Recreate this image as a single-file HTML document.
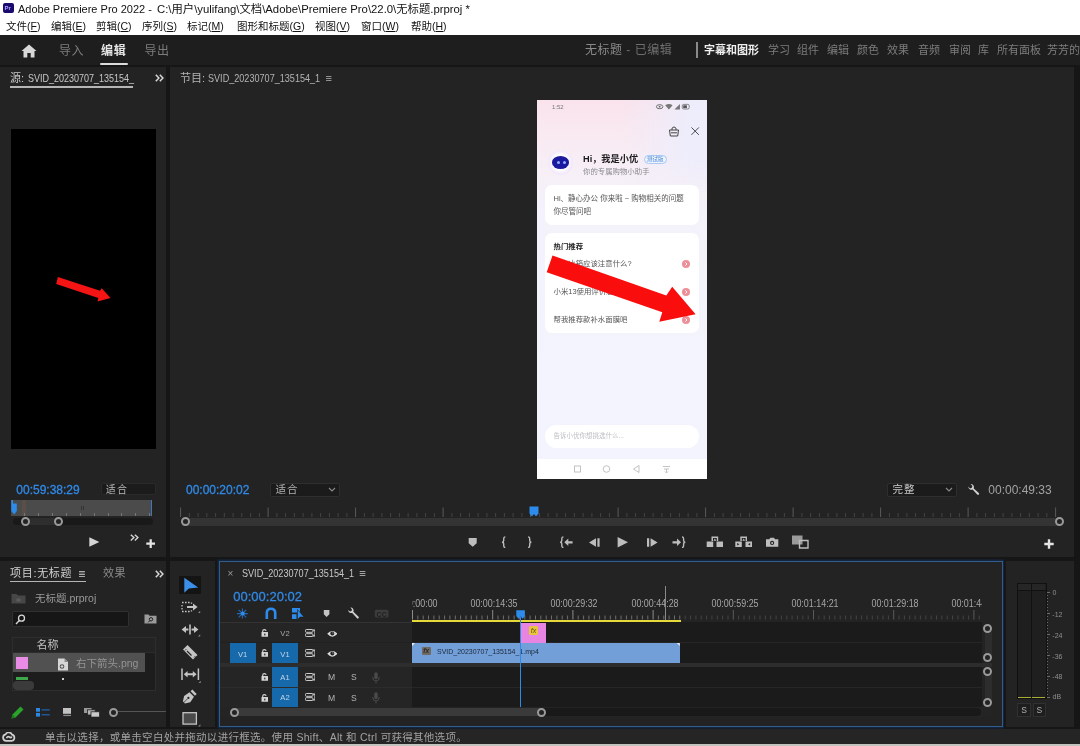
<!DOCTYPE html>
<html lang="zh-CN">
<head>
<meta charset="utf-8">
<title>Adobe Premiere Pro 2022</title>
<style>
*{box-sizing:border-box;margin:0;padding:0}
html,body{width:1080px;height:746px;overflow:hidden;background:#161616}
body{position:relative;font-family:"Liberation Sans","Noto Sans CJK SC",sans-serif;font-size:11px;color:#a9a9a9}
.abs{position:absolute}
.t{position:absolute;white-space:nowrap;line-height:1}
/* title + menu */
#titlebar{left:0;top:0;width:1080px;height:35px;background:#fff}
#titlebar .t{color:#111}
/* workspace header */
#header{left:0;top:35px;width:1080px;height:30px;background:#1e1e1e}
/* panels */
.panel{position:absolute;background:#232323}
.wsr{font-size:11px;color:#7c7c7c}
.mi{font-size:10.5px}
.dot{width:8px;height:8px;border-radius:50%;background:#ee8f97}
.rl{font-size:10.5px;color:#a6a6a6;transform:scaleX(.85);transform-origin:50% 50%}
.tk{font-size:7.6px;color:#c4d4e6;text-align:center}
.ms{font-size:8.6px;color:#b2b2b2}
.blue{color:#3089e6;-webkit-text-stroke:.3px #3089e6}
.box{position:absolute;background:#1b1b1b;border:1px solid #2e2e2e;border-radius:2px}
.ring{position:absolute;width:9px;height:9px;border:2px solid #9a9a9a;border-radius:50%;background:#232323}
</style>
</head>
<body>
<div id="root" style="position:absolute;left:0;top:0;width:1080px;height:746px;will-change:transform">
<!-- ===== Title bar & menu ===== -->
<div id="titlebar" class="abs">
  <div class="abs" style="left:3px;top:3px;width:11px;height:10px;background:#1a0a6e;border-radius:2px"></div>
  <div class="t" style="left:4.5px;top:4.5px;font-size:6px;font-weight:bold;color:#b9a6ff">Pr</div>
  <div class="t" id="ttl" style="left:18px;top:4px;font-size:11px">Adobe Premiere Pro 2022 - <span style="position:absolute;left:139px;top:-.2px;font-size:11.33px">C:\用户\yulifang\文档\Adobe\Premiere Pro\22.0\无标题.prproj *</span></div>
  <div class="t mi" style="left:6px;top:21px">文件(<u>F</u>)</div>
  <div class="t mi" style="left:51px;top:21px">编辑(<u>E</u>)</div>
  <div class="t mi" style="left:96px;top:21px">剪辑(<u>C</u>)</div>
  <div class="t mi" style="left:142px;top:21px">序列(<u>S</u>)</div>
  <div class="t mi" style="left:187px;top:21px">标记(<u>M</u>)</div>
  <div class="t mi" style="left:237px;top:21px">图形和标题(<u>G</u>)</div>
  <div class="t mi" style="left:315px;top:21px">视图(<u>V</u>)</div>
  <div class="t mi" style="left:361px;top:21px">窗口(<u>W</u>)</div>
  <div class="t mi" style="left:411px;top:21px">帮助(<u>H</u>)</div>
</div>

<!-- ===== Workspace header ===== -->
<div id="header" class="abs">
  <svg class="abs" style="left:21px;top:9px" width="16" height="14" viewBox="0 0 16 14"><path d="M8 0.5 L0.5 7 H2.5 V13.5 H6.3 V9 H9.7 V13.5 H13.5 V7 H15.5 Z" fill="#d8d8d8"/></svg>
  <div class="t ws" style="left:59px;top:9.5px;font-size:12px;letter-spacing:.5px;color:#7d7d7d">导入</div>
  <div class="t ws" style="left:101px;top:9.5px;font-size:12px;letter-spacing:.8px;color:#e6e6e6;font-weight:bold">编辑</div>
  <div class="abs" style="left:100px;top:27.8px;width:27.6px;height:2.1px;background:#dcdcdc;border-radius:1px"></div>
  <div class="t ws" style="left:144.5px;top:9.5px;font-size:12px;letter-spacing:.5px;color:#7d7d7d">导出</div>
  <div class="t" style="left:585px;top:9px;font-size:12px;color:#6f6f6f;letter-spacing:.5px"><span style="color:#8a8a8a">无标题</span> - 已编辑</div>
  <div class="abs" style="left:696px;top:7px;width:2px;height:16px;background:#8a8a8a"></div>
  <div class="t" style="left:704px;top:10px;font-size:11px;color:#f0f0f0;font-weight:bold">字幕和图形</div>
  <div class="t wsr" style="left:768px;top:10px">学习</div>
  <div class="t wsr" style="left:797px;top:10px">组件</div>
  <div class="t wsr" style="left:827px;top:10px">编辑</div>
  <div class="t wsr" style="left:857px;top:10px">颜色</div>
  <div class="t wsr" style="left:887px;top:10px">效果</div>
  <div class="t wsr" style="left:918px;top:10px">音频</div>
  <div class="t wsr" style="left:949px;top:10px">审阅</div>
  <div class="t wsr" style="left:978px;top:10px">库</div>
  <div class="t wsr" style="left:997px;top:10px">所有面板</div>
  <div class="t wsr" style="left:1047px;top:10px">芳芳的</div>
</div>

<!-- ===== Source panel ===== -->
<div id="source" class="panel" style="left:0;top:67px;width:166px;height:490px">
  <div class="t" style="left:10px;top:5.5px;font-size:11px;color:#c8c8c8">源:</div><div class="t" style="left:27.5px;top:5.5px;font-size:11px;color:#c8c8c8;transform:scaleX(.817);transform-origin:0 0">SVID_20230707_135154_</div>
  <div class="abs" style="left:10px;top:19px;width:123px;height:2px;background:#b5b5b5"></div>
  <svg class="abs" style="left:154.5px;top:7px" width="9" height="8" viewBox="0 0 9 8" fill="none" stroke="#d6d6d6" stroke-width="1.5"><path d="M0.8 0.8 L3.9 4 L0.8 7.2 M4.8 0.8 L7.9 4 L4.8 7.2"/></svg>
  <div class="abs" style="left:11.1px;top:61.5px;width:144.8px;height:320.9px;background:#000"></div>
  <svg class="abs" style="left:50px;top:203px" width="70" height="40" viewBox="50 270 70 40"><path d="M57.9 277 L100 290.8 L101.7 288.2 L110.5 297.9 L97.5 301.4 L98.3 298 L56.2 283.9 Z" fill="#f51414"/></svg>
  <div class="t blue" style="left:16.3px;top:417px;font-size:12px">00:59:38:29</div>
  <div class="box" style="left:100.5px;top:416px;width:55px;height:12px;border-color:#2a2a2a"></div>
  <div class="t" style="left:105.8px;top:417.6px;font-size:10px;color:#b8b8b8;letter-spacing:1.2px">适合</div>
  <div class="abs" style="left:11px;top:433.2px;width:141px;height:16px;background:#4b4b4b"></div>
  <div class="abs" style="left:22px;top:433.2px;width:4px;height:16px;background:#5a4f46"></div>
  <div class="abs" style="left:24.4px;top:445.5px;width:1px;height:3.7px;background:#777"></div><div class="abs" style="left:38.2px;top:445.5px;width:1px;height:3.7px;background:#777"></div><div class="abs" style="left:52.1px;top:445.5px;width:1px;height:3.7px;background:#777"></div><div class="abs" style="left:65.9px;top:445.5px;width:1px;height:3.7px;background:#777"></div><div class="abs" style="left:79.8px;top:445.5px;width:1px;height:3.7px;background:#777"></div><div class="abs" style="left:93.7px;top:445.5px;width:1px;height:3.7px;background:#777"></div><div class="abs" style="left:107.5px;top:445.5px;width:1px;height:3.7px;background:#777"></div><div class="abs" style="left:121.3px;top:445.5px;width:1px;height:3.7px;background:#777"></div><div class="abs" style="left:135.2px;top:445.5px;width:1px;height:3.7px;background:#777"></div><div class="abs" style="left:149.0px;top:445.5px;width:1px;height:3.7px;background:#777"></div>
  <div class="abs" style="left:81px;top:438.5px;width:1px;height:4px;background:#333"></div><div class="abs" style="left:83px;top:438.5px;width:1px;height:4px;background:#333"></div>
  <svg class="abs" style="left:10.5px;top:433.2px" width="7" height="15" viewBox="0 0 7 15"><path d="M0.3 0 H2 V3.5 H5.8 V11 L3.2 14.6 L0.3 11 Z" fill="#2d8ceb"/></svg>
  <div class="abs" style="left:150.8px;top:433.2px;width:1.2px;height:16px;background:#3d78b8"></div>
  <div class="abs" style="left:13.4px;top:451.3px;width:140px;height:6.8px;background:#191919;border-radius:3.4px"></div>
  <div class="abs" style="left:25px;top:451.3px;width:34px;height:6.8px;background:#2e2e2e"></div>
  <div class="ring" style="left:20.7px;top:450.2px"></div>
  <div class="ring" style="left:54.1px;top:450.2px"></div>
  <svg class="abs" style="left:89px;top:470.4px" width="11" height="10" viewBox="0 0 11 10"><path d="M0.3 0.3 L10.4 5 L0.3 9.7 Z" fill="#d4d4d4"/></svg>
  <svg class="abs" style="left:130.3px;top:466.5px" width="9" height="8" viewBox="0 0 9 8" fill="none" stroke="#d6d6d6" stroke-width="1.4"><path d="M0.8 0.8 L3.9 3.6 L0.8 6.4 M4.8 0.8 L7.9 3.6 L4.8 6.4"/></svg>
  <svg class="abs" style="left:146px;top:471.6px" width="9.4" height="9.4" viewBox="0 0 10 10"><path d="M3.8 0.3 H6.2 V3.8 H9.7 V6.2 H6.2 V9.7 H3.8 V6.2 H0.3 V3.8 H3.8 Z" fill="#e4e4e4"/></svg>
</div>

<!-- ===== Program panel ===== -->
<div id="program" class="panel" style="left:170px;top:67px;width:904px;height:490px">
  <div class="t" style="left:10px;top:5.5px;font-size:11px;color:#b4b4b4">节目:</div><div class="t" style="left:37.8px;top:5.5px;font-size:11px;color:#b4b4b4;transform:scaleX(.826);transform-origin:0 0">SVID_20230707_135154_1</div><div class="t" style="left:155.5px;top:5.5px;font-size:11px;color:#b4b4b4">≡</div>

  <!-- program controls -->
  <div class="t blue" style="left:16px;top:417px;font-size:12px">00:00:20:02</div>
  <div class="box" style="left:100px;top:415.5px;width:70px;height:14px"></div>
  <div class="t" style="left:105.5px;top:417px;font-size:10.5px;color:#b0b0b0;letter-spacing:1px">适合</div>
  <svg class="abs" style="left:157.5px;top:420px" width="8" height="5" viewBox="0 0 8 5" fill="none" stroke="#8a8a8a" stroke-width="1.1"><path d="M1 1 L4 4 L7 1"/></svg>
  <div class="box" style="left:717px;top:415.5px;width:70px;height:14px"></div>
  <div class="t" style="left:722.5px;top:417px;font-size:10.5px;color:#c8c8c8;letter-spacing:1px">完整</div>
  <svg class="abs" style="left:774.5px;top:420px" width="8" height="5" viewBox="0 0 8 5" fill="none" stroke="#8a8a8a" stroke-width="1.1"><path d="M1 1 L4 4 L7 1"/></svg>
  <svg class="abs" style="left:797px;top:415.5px" width="13" height="13" viewBox="0 0 13 13"><path d="M1.2 3.6 A3.3 3.3 0 0 0 5.6 6.6 L10.2 11.6 A1.1 1.1 0 0 0 11.8 10 L6.8 5.4 A3.3 3.3 0 0 0 3.6 1 L5.4 3 L4.8 4.8 L3 5.4 Z" fill="#cfcfcf"/></svg>
  <div class="t" style="left:818.3px;top:417px;font-size:12px;color:#a2a2a2">00:00:49:33</div>
  <svg class="abs" style="left:0;top:0" width="904" height="490" viewBox="0 0 904 490" stroke-width="1" fill="none"><path d="M10.6 440.5 V450" stroke="#5a5a5a"/><path d="M19.3 446 V450" stroke="#444"/><path d="M28.1 446 V450" stroke="#444"/><path d="M36.8 446 V450" stroke="#444"/><path d="M45.6 446 V450" stroke="#444"/><path d="M54.3 446 V450" stroke="#444"/><path d="M63.1 446 V450" stroke="#444"/><path d="M71.8 446 V450" stroke="#444"/><path d="M80.6 446 V450" stroke="#444"/><path d="M89.4 446 V450" stroke="#444"/><path d="M98.1 440.5 V450" stroke="#5a5a5a"/><path d="M106.9 446 V450" stroke="#444"/><path d="M115.6 446 V450" stroke="#444"/><path d="M124.4 446 V450" stroke="#444"/><path d="M133.1 446 V450" stroke="#444"/><path d="M141.9 446 V450" stroke="#444"/><path d="M150.6 446 V450" stroke="#444"/><path d="M159.4 446 V450" stroke="#444"/><path d="M168.1 446 V450" stroke="#444"/><path d="M176.9 446 V450" stroke="#444"/><path d="M185.6 440.5 V450" stroke="#5a5a5a"/><path d="M194.4 446 V450" stroke="#444"/><path d="M203.1 446 V450" stroke="#444"/><path d="M211.9 446 V450" stroke="#444"/><path d="M220.6 446 V450" stroke="#444"/><path d="M229.4 446 V450" stroke="#444"/><path d="M238.1 446 V450" stroke="#444"/><path d="M246.9 446 V450" stroke="#444"/><path d="M255.6 446 V450" stroke="#444"/><path d="M264.4 446 V450" stroke="#444"/><path d="M273.1 440.5 V450" stroke="#5a5a5a"/><path d="M281.9 446 V450" stroke="#444"/><path d="M290.6 446 V450" stroke="#444"/><path d="M299.4 446 V450" stroke="#444"/><path d="M308.1 446 V450" stroke="#444"/><path d="M316.9 446 V450" stroke="#444"/><path d="M325.6 446 V450" stroke="#444"/><path d="M334.4 446 V450" stroke="#444"/><path d="M343.1 446 V450" stroke="#444"/><path d="M351.9 446 V450" stroke="#444"/><path d="M360.6 440.5 V450" stroke="#5a5a5a"/><path d="M369.4 446 V450" stroke="#444"/><path d="M378.1 446 V450" stroke="#444"/><path d="M386.9 446 V450" stroke="#444"/><path d="M395.6 446 V450" stroke="#444"/><path d="M404.4 446 V450" stroke="#444"/><path d="M413.1 446 V450" stroke="#444"/><path d="M421.9 446 V450" stroke="#444"/><path d="M430.6 446 V450" stroke="#444"/><path d="M439.4 446 V450" stroke="#444"/><path d="M448.1 440.5 V450" stroke="#5a5a5a"/><path d="M456.9 446 V450" stroke="#444"/><path d="M465.6 446 V450" stroke="#444"/><path d="M474.4 446 V450" stroke="#444"/><path d="M483.1 446 V450" stroke="#444"/><path d="M491.9 446 V450" stroke="#444"/><path d="M500.6 446 V450" stroke="#444"/><path d="M509.4 446 V450" stroke="#444"/><path d="M518.1 446 V450" stroke="#444"/><path d="M526.9 446 V450" stroke="#444"/><path d="M535.6 440.5 V450" stroke="#5a5a5a"/><path d="M544.4 446 V450" stroke="#444"/><path d="M553.1 446 V450" stroke="#444"/><path d="M561.9 446 V450" stroke="#444"/><path d="M570.6 446 V450" stroke="#444"/><path d="M579.4 446 V450" stroke="#444"/><path d="M588.1 446 V450" stroke="#444"/><path d="M596.9 446 V450" stroke="#444"/><path d="M605.6 446 V450" stroke="#444"/><path d="M614.4 446 V450" stroke="#444"/><path d="M623.1 440.5 V450" stroke="#5a5a5a"/><path d="M631.9 446 V450" stroke="#444"/><path d="M640.6 446 V450" stroke="#444"/><path d="M649.4 446 V450" stroke="#444"/><path d="M658.1 446 V450" stroke="#444"/><path d="M666.9 446 V450" stroke="#444"/><path d="M675.6 446 V450" stroke="#444"/><path d="M684.4 446 V450" stroke="#444"/><path d="M693.1 446 V450" stroke="#444"/><path d="M701.9 446 V450" stroke="#444"/><path d="M710.6 440.5 V450" stroke="#5a5a5a"/><path d="M719.4 446 V450" stroke="#444"/><path d="M728.1 446 V450" stroke="#444"/><path d="M736.9 446 V450" stroke="#444"/><path d="M745.6 446 V450" stroke="#444"/><path d="M754.4 446 V450" stroke="#444"/><path d="M763.1 446 V450" stroke="#444"/><path d="M771.9 446 V450" stroke="#444"/><path d="M780.6 446 V450" stroke="#444"/><path d="M789.4 446 V450" stroke="#444"/><path d="M798.1 440.5 V450" stroke="#5a5a5a"/><path d="M806.9 446 V450" stroke="#444"/><path d="M815.6 446 V450" stroke="#444"/><path d="M824.4 446 V450" stroke="#444"/><path d="M833.1 446 V450" stroke="#444"/><path d="M841.9 446 V450" stroke="#444"/><path d="M850.6 446 V450" stroke="#444"/><path d="M859.3 446 V450" stroke="#444"/><path d="M868.1 446 V450" stroke="#444"/><path d="M876.8 446 V450" stroke="#444"/><path d="M885.6 440.5 V450" stroke="#5a5a5a"/></svg>
  <div class="abs" style="left:12px;top:450.5px;width:878px;height:8.5px;background:#343434"></div>
  <div class="ring" style="left:11px;top:450px"></div>
  <div class="ring" style="left:884.5px;top:450px"></div>
  <svg class="abs" style="left:359px;top:438.5px" width="10" height="11" viewBox="0 0 10 11"><path d="M0.5 0.5 H9.5 V7.5 L7 10.5 L5 8 L3 10.5 L0.5 7.5 Z" fill="#2d8ceb"/></svg>
  <svg class="abs" style="left:290px;top:463px" width="360" height="25" viewBox="460 530 360 25" fill="#bdbdbd" stroke="none">
    <path d="M468.7 538 H476.7 V543.3 L472.7 546.8 L468.7 543.3 Z"/>
    <path d="M505.3 537 C503.7 537 503.7 537.6 503.7 539.2 V540.6 C503.7 541.8 503.1 542.2 502.0 542.2 C503.1 542.2 503.7 542.6 503.7 543.8 V545.2 C503.7 546.8 503.7 547.4 505.3 547.4" fill="none" stroke="#bdbdbd" stroke-width="1.4"/>
    <path d="M528.1 537 C529.7 537 529.7 537.6 529.7 539.2 V540.6 C529.7 541.8 530.3 542.2 531.4 542.2 C530.3 542.2 529.7 542.6 529.7 543.8 V545.2 C529.7 546.8 529.7 547.4 528.1 547.4" fill="none" stroke="#bdbdbd" stroke-width="1.4"/>
    <path d="M563.4 537 C561.8 537 561.8 537.6 561.8 539.2 V540.6 C561.8 541.8 561.2 542.2 560.1 542.2 C561.2 542.2 561.8 542.6 561.8 543.8 V545.2 C561.8 546.8 561.8 547.4 563.4 547.4" fill="none" stroke="#bdbdbd" stroke-width="1.4"/>
    <path d="M564.3 542.3 L568.3 538.6 V541.2 H572.6 V543.4 H568.3 V546 Z"/>
    <path d="M589 542.5 L596 538.2 V546.8 Z M597.4 538.2 H599.6 V546.8 H597.4 Z"/>
    <path d="M617.6 537 L628 542.2 L617.6 547.4 Z"/>
    <path d="M647 538.2 H649.2 V546.8 H647 Z M650.6 538.2 L657.6 542.5 L650.6 546.8 Z"/>
    <path d="M672.5 541.2 H677 V538.6 L681 542.3 L677 546 V543.4 H672.5 Z"/>
    <path d="M682.0 537 C683.6 537 683.6 537.6 683.6 539.2 V540.6 C683.6 541.8 684.2 542.2 685.3 542.2 C684.2 542.2 683.6 542.6 683.6 543.8 V545.2 C683.6 546.8 683.6 547.4 682.0 547.4" fill="none" stroke="#bdbdbd" stroke-width="1.4"/>
    <path d="M706.7 541.5 H713.2 V547 H706.7 Z M716.5 541.5 H723 V547 H716.5 Z M711.5 536.5 H718.2 V541 H716.8 V538 H713 V541 H711.5 Z M714.9 538.6 L716.3 540.8 H713.5 Z"/>
    <path d="M735.3 541.5 H741.8 V547 H735.3 Z M745.5 541.5 H752 V547 H745.5 Z M740.3 536.5 H747 V541 H745.6 V538 H741.8 V541 H740.3 Z M743.7 538.6 L745.1 540.8 H742.3 Z"/>
    <path d="M737.2 543 L739.4 544.3 L737.2 545.6 Z M750.2 543 L748 544.3 L750.2 545.6 Z" fill="#232323"/>
    <path d="M766 539.3 H769.3 L770.3 537.7 H774 L775 539.3 H778.3 V546.8 H766 Z"/>
    <circle cx="772.1" cy="542.9" r="2.1" fill="#232323"/><circle cx="772.1" cy="542.9" r="1" fill="#bdbdbd"/>
    <path d="M792 535.5 H802.5 V544.5 H792 Z" fill="#9a9a9a"/>
    <path d="M799.5 540.5 H808 V548 H799.5 Z" fill="none" stroke="#bdbdbd" stroke-width="1.4"/>
  </svg>
  <svg class="abs" style="left:874px;top:471.5px" width="10" height="10" viewBox="0 0 10 10"><path d="M3.8 0.3 H6.2 V3.8 H9.7 V6.2 H6.2 V9.7 H3.8 V6.2 H0.3 V3.8 H3.8 Z" fill="#e4e4e4"/></svg>
  <!-- phone frame -->
  <div id="phone" class="abs" style="left:367px;top:33px;width:170px;height:378.6px;overflow:hidden;background:linear-gradient(180deg,#fae3ec 0%,#f9eaf2 10%,#f7eff6 18%,#f4f1fa 27%,#f3f3fc 45%,#f3f4fd 100%);font-family:'Liberation Sans','Noto Sans CJK SC',sans-serif">
    <div class="abs" style="left:85px;top:0;width:85px;height:95px;background:linear-gradient(90deg,rgba(238,238,252,0),rgba(236,237,252,.95) 85%);-webkit-mask-image:linear-gradient(180deg,#000 60%,transparent);mask-image:linear-gradient(180deg,#000 60%,transparent)"></div>
    <div class="t" style="left:15px;top:4px;font-size:6px;color:#777">1:52</div>
    <svg class="abs" style="left:118px;top:2.8px" width="37" height="7.4" viewBox="0 0 38 8">
      <ellipse cx="4" cy="4" rx="3.5" ry="2.2" fill="none" stroke="#666" stroke-width="1"/><circle cx="4" cy="4" r="1" fill="#666"/>
      <path d="M10 2.5 Q14 -0.5 18 2.5 L14 7 Z" fill="#777"/>
      <path d="M20 7 L26 1 V7 Z" fill="#777"/>
      <rect x="28.5" y="1.5" width="7.5" height="5" rx="1.5" fill="none" stroke="#666" stroke-width=".8"/><rect x="29.5" y="2.5" width="4" height="3" fill="#555"/>
    </svg>
    <svg class="abs" style="left:131px;top:25px" width="12" height="12" viewBox="0 0 12 12" fill="none" stroke="#444" stroke-width="1"><path d="M1.5 5 H10.5 L9.7 11 H2.3 Z"/><path d="M4 5 V3.2 Q6 0.5 8 3.2 V5"/><path d="M3 7.8 H9"/></svg>
    <svg class="abs" style="left:154.4px;top:26.8px" width="8.3" height="8.3" viewBox="0 0 9 9" stroke="#444" stroke-width="1.05"><path d="M0.5 0.5 L8.5 8.5 M8.5 0.5 L0.5 8.5"/></svg>
    <!-- avatar -->
    <div class="abs" style="left:11px;top:50px;width:25px;height:25px;border-radius:50%;background:radial-gradient(circle,#ffffff 40%,#efe6fb 70%,rgba(238,228,250,0) 100%)"></div>
    <div class="abs" style="left:15.2px;top:56px;width:17px;height:12.6px;border-radius:50%;background:#1b1a9e"></div>
    <div class="abs" style="left:19.5px;top:60.5px;width:3px;height:3px;border-radius:50%;background:#8fb0ff"></div>
    <div class="abs" style="left:25.5px;top:60.5px;width:3px;height:3px;border-radius:50%;background:#8fb0ff"></div>
    <div class="t" style="left:46px;top:54.5px;font-size:9.2px;font-weight:bold;color:#1a1a1a">Hi，我是小优</div>
    <div class="abs" style="left:106.5px;top:55px;width:23.5px;height:8.5px;border:1px solid #a9c8f2;border-radius:4.5px;background:#eef4fd"></div>
    <div class="t" style="left:110px;top:56.7px;font-size:5.5px;color:#4a86d8">测试版</div>
    <div class="t" style="left:46px;top:68.2px;font-size:7.4px;color:#8a8a8f">你的专属购物小助手</div>
    <!-- card 1 -->
    <div class="abs" style="left:7.5px;top:85px;width:154.5px;height:40px;border-radius:7px;background:#fff"></div>
    <div class="t" style="left:16.5px;top:94.8px;font-size:7.5px;color:#555">Hi、静心办公 你来啦 ~ 购物相关的问题</div>
    <div class="t" style="left:16.5px;top:107.8px;font-size:7.5px;color:#555">你尽管问吧</div>
    <!-- card 2 -->
    <div class="abs" style="left:7.5px;top:132.5px;width:154.5px;height:100.5px;border-radius:7px;background:#fff"></div>
    <div class="t" style="left:16.5px;top:142.8px;font-size:7.4px;font-weight:bold;color:#222">热门推荐</div>
    <div class="t" style="left:16.5px;top:160px;font-size:7.4px;color:#555">买电冰箱应该注意什么?</div>
    <div class="t" style="left:16.5px;top:188.3px;font-size:7.4px;color:#555">小米13使用评价怎么样</div>
    <div class="t" style="left:16.5px;top:216.3px;font-size:7.4px;color:#555">帮我推荐款补水面膜吧</div>
    <div class="abs dot" style="left:145px;top:159.5px"><svg class="abs" style="left:0;top:0" width="8" height="8" viewBox="0 0 8 8" fill="none" stroke="#fff" stroke-width=".9"><path d="M3.3 2.3 L5 4 L3.3 5.7"/></svg></div>
    <div class="abs dot" style="left:145px;top:188px"><svg class="abs" style="left:0;top:0" width="8" height="8" viewBox="0 0 8 8" fill="none" stroke="#fff" stroke-width=".9"><path d="M3.3 2.3 L5 4 L3.3 5.7"/></svg></div>
    <div class="abs dot" style="left:145px;top:216px"><svg class="abs" style="left:0;top:0" width="8" height="8" viewBox="0 0 8 8" fill="none" stroke="#fff" stroke-width=".9"><path d="M3.3 2.3 L5 4 L3.3 5.7"/></svg></div>
    <!-- red arrow -->
    <svg class="abs" style="left:0;top:140px" width="170" height="100" viewBox="537 240 170 100"><path d="M552.5 255.5 L666.3 295.4 L672.2 286.7 L695.6 314.3 L659.3 321.8 L662.3 312.3 L546.7 272.2 Z" fill="#f90d0d"/></svg>
    <!-- input -->
    <div class="abs" style="left:8px;top:324.5px;width:154px;height:23px;border-radius:11.5px;background:#fff"></div>
    <div class="t" style="left:16.5px;top:333px;font-size:6.5px;color:#bdbdc4">告诉小优你想挑选什么...</div>
    <!-- nav bar -->
    <div class="abs" style="left:0;top:359.4px;width:170px;height:19.4px;background:#fff"></div>
    <svg class="abs" style="left:30px;top:362px" width="110" height="14" viewBox="0 0 110 14" fill="none" stroke="#bcbcbc" stroke-width=".9">
      <rect x="7.5" y="4" width="6" height="6"/><circle cx="39.5" cy="7" r="3.3"/><path d="M72 3.5 L66.5 7 L72 10.5 Z"/><path d="M96 4.5 H103 M97 7 H102 M99.5 7 V10.5 M98 9.5 L99.5 11 L101 9.5"/>
    </svg>
  </div>
</div>

<!-- ===== Project panel ===== -->
<div id="project" class="panel" style="left:0;top:561px;width:166px;height:166px">
  <div class="t" style="left:10px;top:7px;font-size:11px;color:#d2d2d2;letter-spacing:.7px">项目:无标题</div><div class="t" style="left:78.3px;top:6.8px;font-size:12px;color:#d2d2d2">≡</div>
  <div class="abs" style="left:10px;top:19.5px;width:76px;height:1.5px;background:#b5b5b5"></div>
  <div class="t" style="left:103px;top:7px;font-size:11px;color:#8a8a8a;letter-spacing:.6px">效果</div>
  <svg class="abs" style="left:154.5px;top:8.5px" width="9" height="8" viewBox="0 0 9 8" fill="none" stroke="#d6d6d6" stroke-width="1.5"><path d="M0.8 0.8 L3.9 4 L0.8 7.2 M4.8 0.8 L7.9 4 L4.8 7.2"/></svg>
  <svg class="abs" style="left:11px;top:31.5px" width="15" height="11" viewBox="0 0 15 11"><path d="M0.5 1 H5.5 L7 2.5 H14.5 V10.5 H0.5 Z" fill="#474747"/><path d="M5.5 5.5 h4 v3 h-4z" fill="#5c5c5c"/></svg>
  <div class="t" style="left:35px;top:31.5px;font-size:10.5px;color:#9a9a9a">无标题.prproj</div>
  <div class="abs" style="left:11.5px;top:50px;width:117px;height:16px;background:#161616;border:1px solid #303030;border-radius:2px"></div>
  <svg class="abs" style="left:15px;top:52.5px" width="11" height="11" viewBox="0 0 11 11" fill="none" stroke="#d8d8d8" stroke-width="1.3"><circle cx="6.5" cy="4.2" r="3"/><path d="M4.3 6.5 L1 10"/></svg>
  <svg class="abs" style="left:143.5px;top:53px" width="13" height="10" viewBox="0 0 13 10"><path d="M0.5 0.5 H4.5 L5.5 1.8 H12.5 V9.5 H0.5 Z" fill="#9a9a9a"/><circle cx="7" cy="5.3" r="1.7" fill="none" stroke="#232323" stroke-width="1"/><path d="M5.8 6.6 L4.3 8.3" stroke="#232323" stroke-width="1"/></svg>
  <!-- list -->
  <div class="abs" style="left:11.5px;top:75.5px;width:144.5px;height:54px;background:#1d1d1d;border:1px solid #2e2e2e"></div>
  <div class="abs" style="left:12.5px;top:76.5px;width:142.5px;height:15.5px;background:#232323;border-bottom:1px solid #2c2c2c"></div>
  <div class="t" style="left:36.5px;top:79px;font-size:11px;color:#c4c4c4">名称</div>
  <div class="abs" style="left:12.5px;top:92.3px;width:132.5px;height:19px;background:#515151"></div>
  <div class="abs" style="left:16px;top:95.7px;width:12.3px;height:12.3px;background:#e88ce6"></div>
  <svg class="abs" style="left:57px;top:96.5px" width="12" height="13" viewBox="0 0 12 13"><path d="M1 0.5 H7.5 L11 4 V12.5 H1 Z" fill="#d6d6d6"/><path d="M7.5 0.5 V4 H11 Z" fill="#8a8a8a"/><circle cx="5" cy="8.5" r="2.3" fill="#515151"/><path d="M3.4 8.5 L5 6.9 L6.6 8.5 L5 10.1 Z" fill="#d6d6d6"/></svg>
  <div class="t" style="left:76px;top:96.8px;font-size:10.5px;color:#949494">右下箭头.png</div>
  <div class="abs" style="left:16.3px;top:115.6px;width:11.8px;height:3.6px;background:#3fa84c"></div>
  <div class="abs" style="left:61.5px;top:116.5px;width:2px;height:2px;background:#ccc"></div>
  <div class="abs" style="left:12.5px;top:120px;width:21px;height:8.5px;background:#3b3b3b;border-radius:4px"></div>
  <!-- footer icons -->
  <svg class="abs" style="left:10px;top:143.5px" width="15" height="15" viewBox="0 0 15 15"><path d="M1.5 13.5 L2.5 9.5 L10.5 1.5 L13.5 4.5 L5.5 12.5 Z" fill="#2ba32b"/><path d="M1.5 13.5 L2.5 9.5 L5.5 12.5 Z" fill="#1e7a1e"/></svg>
  <svg class="abs" style="left:36px;top:147.3px" width="14" height="9" viewBox="0 0 14 9"><rect x="0" y="0" width="4" height="3.7" fill="#2d86e0"/><rect x="0" y="4.9" width="4" height="3.7" fill="#2d86e0"/><rect x="5.5" y="1.2" width="8.3" height="1.3" fill="#1f5fa6"/><rect x="5.5" y="6.1" width="8.3" height="1.3" fill="#1f5fa6"/></svg>
  <svg class="abs" style="left:63px;top:147.3px" width="8.4" height="8.4" viewBox="0 0 8.4 8.4"><rect x="0" y="0" width="8.4" height="5.8" fill="#c2c2c2"/><rect x="0.3" y="6.8" width="7.8" height="1.3" fill="#8a8a8a"/></svg>
  <svg class="abs" style="left:84px;top:146.8px" width="16" height="9.4" viewBox="0 0 16 9.4"><rect x="0" y="0" width="7.5" height="5" fill="#9a9a9a"/><rect x="3.4" y="1.8" width="7.8" height="5.2" fill="#b4b4b4" stroke="#232323" stroke-width=".8"/><rect x="7" y="3.8" width="8.6" height="5.3" fill="#cacaca" stroke="#232323" stroke-width=".8"/></svg>
  <div class="abs" style="left:118px;top:150.4px;width:48px;height:1px;background:#555"></div>
  <div class="ring" style="left:108.9px;top:146.6px"></div>
</div>

<!-- ===== Tools panel ===== -->
<div id="tools" class="panel" style="left:170px;top:561px;width:45px;height:166px">
  <div class="abs" style="left:9.4px;top:15.2px;width:21.2px;height:18.3px;background:#141414;border-radius:1px"></div>
  <svg class="abs" style="left:6px;top:14px" width="30" height="152" viewBox="176 575 30 152">
    <path d="M184.3 577.8 V592.8 L188.8 588.6 L198.2 587.6 Z" fill="#3b8fe8"/>
    <!-- track select -->
    <path d="M182 602.5 h1.6 M185 602.5 h1.6 M188 602.5 h1.6 M182 605 v1.4 M182 608 v1.4 M182 611.5 h1.6 M185 611.5 h1.6 M188 611.5 h1.6 M191.5 602.5 v1.2 M191.5 610.3 v1.2" stroke="#c4c4c4" stroke-width="1.3" fill="none"/>
    <path d="M187 606 H193 V603.6 L197.6 607 L193 610.4 V608 H187 Z" fill="#c4c4c4"/>
    <path d="M198 613 h2.2 v-2.2 z" fill="#8a8a8a"/>
    <!-- ripple -->
    <path d="M189.2 624.6 h1.6 v10 h-1.6 z" fill="#c4c4c4"/>
    <path d="M181.6 629.5 L186 626 V628.4 H188.4 V630.6 H186 V633 Z M198.4 629.5 L194 626 V628.4 H191.6 V630.6 H194 V633 Z" fill="#c4c4c4"/>
    <path d="M198 636.5 h2.2 v-2.2 z" fill="#8a8a8a"/>
    <!-- razor -->
    <path d="M183 649.5 L187.5 645 L197.5 655 L193 659.5 Z" fill="#c4c4c4"/>
    <path d="M187 651 L191.5 655.5" stroke="#232323" stroke-width="1.1"/>
    <path d="M185 650.5 l1.5 -1.5 M194 657.5 l1.5 -1.5" stroke="#232323" stroke-width=".8"/>
    <!-- slip -->
    <path d="M182 668.5 v11.5 M198.4 668.5 v11.5" stroke="#c4c4c4" stroke-width="1.5"/>
    <path d="M183.8 674.3 L187.6 671 V673.3 H192.8 V671 L196.6 674.3 L192.8 677.6 V675.3 H187.6 V677.6 Z" fill="#c4c4c4"/>
    <path d="M198.5 683 h2.2 v-2.2 z" fill="#8a8a8a"/>
    <!-- pen -->
    <g transform="translate(189.8 696.5) scale(.82) translate(-191.4 -697.6)"><path d="M183 703.5 L184.5 697 L191 692.5 L196.5 698 L192 704.5 L185.5 706 Z" fill="#c4c4c4"/>
    <path d="M192.3 691.3 L194.5 689.2 L199.8 694.5 L197.7 696.7 Z" fill="#c4c4c4"/>
    <circle cx="189.7" cy="699.3" r="1.3" fill="#232323"/>
    <path d="M183.6 705.4 L188.8 700.2" stroke="#232323" stroke-width=".9"/></g>
    <!-- rect -->
    <rect x="183" y="712.7" width="13.4" height="11.4" fill="#4a4a4a" stroke="#c4c4c4" stroke-width="1.3"/>
    <path d="M198.2 726.5 h2.2 v-2.2 z" fill="#8a8a8a"/>
  </svg>
</div>

<!-- ===== Timeline panel ===== -->
<div id="timeline" class="panel" style="left:219px;top:561px;width:783.5px;height:166px;border:1px solid #345c8a;box-shadow:0 0 0 1.5px #14263f">
  <div class="t" style="left:7.5px;top:6.5px;font-size:10px;color:#9a9a9a">×</div>
  <div class="t" style="left:21.9px;top:6.3px;font-size:11px;color:#c8c8c8;transform:scaleX(.826);transform-origin:0 0">SVID_20230707_135154_1</div><div class="t" style="left:139.3px;top:6.3px;font-size:11.5px;color:#c8c8c8">≡</div>
  <div class="t blue" style="left:13.3px;top:28px;font-size:13px">00:00:20:02</div>
  <!-- toolbar icons -->
  <svg class="abs" style="left:15px;top:44px" width="160" height="15" viewBox="235 606 160 15">
    <g stroke="#2468b4" stroke-width="1.1" fill="none"><path d="M242.4 608.6 V618.6 M237 613.6 H247.8 M238.6 609.8 L246.2 617.4 M246.2 609.8 L238.6 617.4"/></g>
    <circle cx="242.7" cy="613.6" r="2" fill="#2d8ceb"/>
    <path d="M266.8 619 V613 Q266.8 608.8 271 608.8 Q275.2 608.8 275.2 613 V619" fill="none" stroke="#2d8ceb" stroke-width="2.6"/>
    <path d="M292 608 H300 V612.5 H292 Z" fill="#2d8ceb"/><path d="M292 614.2 H296.5 V619 H292 Z" fill="#2d8ceb"/>
    <path d="M297.5 609.5 V619.5 L300 617 L304 617 Z" fill="#2d8ceb" stroke="#232323" stroke-width=".6"/>
    <path d="M323.8 610 H329.4 V614.3 L326.6 617 L323.8 614.3 Z" fill="#c4c4c4"/>
    <path d="M348.2 610 A3 3 0 0 0 352.2 612.9 L357 618.3 A1.1 1.1 0 0 0 358.6 616.8 L353.4 611.8 A3 3 0 0 0 350.4 607.6 L352 609.5 L351.5 611 L350 611.5 Z" fill="#cfcfcf"/>
    <rect x="374.8" y="609.8" width="13.6" height="7.8" rx="1.5" fill="#3c3c3c"/>
  </svg>
  <div class="t" style="left:156.6px;top:48.5px;font-size:7px;font-weight:bold;color:#202020">CC</div>
  <!-- header area -->
  <div class="abs" style="left:0px;top:60.3px;width:191.8px;height:85.0px;background:#252525;border-top:1px solid #333"></div>
  <div class="abs" style="left:0px;top:80px;width:191.8px;height:1px;background:#202020"></div>
  <div class="abs" style="left:0px;top:124.6px;width:191.8px;height:1px;background:#2c2c2c"></div>
  <div class="abs" style="left:9.9px;top:81.4px;width:26.3px;height:19.2px;background:#166aac"></div>
  <div class="t tk" style="left:9.4px;top:88.5px;width:26.3px">V1</div>
  <div class="abs" style="left:52px;top:81.4px;width:26px;height:19.2px;background:#166aac"></div>
  <div class="abs" style="left:52px;top:105px;width:26px;height:19.8px;background:#166aac"></div>
  <div class="abs" style="left:52px;top:125.6px;width:26px;height:19.2px;background:#166aac"></div>
  <div class="t tk" style="left:52px;top:68.2px;width:26px;color:#a8a8a8">V2</div>
  <div class="t tk" style="left:52px;top:88.5px;width:26px">V1</div>
  <div class="t tk" style="left:52px;top:112.3px;width:26px">A1</div>
  <div class="t tk" style="left:52px;top:132.2px;width:26px">A2</div>
  <svg class="abs" style="left:40.9px;top:66.8px" width="7.4" height="8" viewBox="0 0 7.4 8"><path d="M1.7 3.2 V2.3 Q1.7 0.6 3.4 0.6 Q4.9 0.6 5.1 1.8" fill="none" stroke="#d4d4d4" stroke-width="1.15"/><rect x="0.5" y="3" width="6.6" height="4.8" rx=".5" fill="#d4d4d4"/><rect x="3.2" y="4.6" width="1.2" height="1.8" fill="#2a2a2a"/></svg><svg class="abs" style="left:40.9px;top:86.8px" width="7.4" height="8" viewBox="0 0 7.4 8"><path d="M1.7 3.2 V2.3 Q1.7 0.6 3.4 0.6 Q4.9 0.6 5.1 1.8" fill="none" stroke="#d4d4d4" stroke-width="1.15"/><rect x="0.5" y="3" width="6.6" height="4.8" rx=".5" fill="#d4d4d4"/><rect x="3.2" y="4.6" width="1.2" height="1.8" fill="#2a2a2a"/></svg><svg class="abs" style="left:40.9px;top:111px" width="7.4" height="8" viewBox="0 0 7.4 8"><path d="M1.7 3.2 V2.3 Q1.7 0.6 3.4 0.6 Q4.9 0.6 5.1 1.8" fill="none" stroke="#d4d4d4" stroke-width="1.15"/><rect x="0.5" y="3" width="6.6" height="4.8" rx=".5" fill="#d4d4d4"/><rect x="3.2" y="4.6" width="1.2" height="1.8" fill="#2a2a2a"/></svg><svg class="abs" style="left:40.9px;top:131.6px" width="7.4" height="8" viewBox="0 0 7.4 8"><path d="M1.7 3.2 V2.3 Q1.7 0.6 3.4 0.6 Q4.9 0.6 5.1 1.8" fill="none" stroke="#d4d4d4" stroke-width="1.15"/><rect x="0.5" y="3" width="6.6" height="4.8" rx=".5" fill="#d4d4d4"/><rect x="3.2" y="4.6" width="1.2" height="1.8" fill="#2a2a2a"/></svg>
  <svg class="abs" style="left:84.8px;top:66.6px" width="10.6" height="8" viewBox="0 0 10.6 8" fill="none" stroke="#cdcdcd" stroke-width="1"><rect x="0.5" y="0.5" width="7.4" height="2.8" rx=".8"/><rect x="0.5" y="4.7" width="7.4" height="2.8" rx=".8"/><path d="M7.9 1.2 H10 V6.8 H7.9" stroke-width="1.2"/></svg><svg class="abs" style="left:84.8px;top:86.6px" width="10.6" height="8" viewBox="0 0 10.6 8" fill="none" stroke="#cdcdcd" stroke-width="1"><rect x="0.5" y="0.5" width="7.4" height="2.8" rx=".8"/><rect x="0.5" y="4.7" width="7.4" height="2.8" rx=".8"/><path d="M7.9 1.2 H10 V6.8 H7.9" stroke-width="1.2"/></svg><svg class="abs" style="left:84.8px;top:110.8px" width="10.6" height="8" viewBox="0 0 10.6 8" fill="none" stroke="#cdcdcd" stroke-width="1"><rect x="0.5" y="0.5" width="7.4" height="2.8" rx=".8"/><rect x="0.5" y="4.7" width="7.4" height="2.8" rx=".8"/><path d="M7.9 1.2 H10 V6.8 H7.9" stroke-width="1.2"/></svg><svg class="abs" style="left:84.8px;top:131.4px" width="10.6" height="8" viewBox="0 0 10.6 8" fill="none" stroke="#cdcdcd" stroke-width="1"><rect x="0.5" y="0.5" width="7.4" height="2.8" rx=".8"/><rect x="0.5" y="4.7" width="7.4" height="2.8" rx=".8"/><path d="M7.9 1.2 H10 V6.8 H7.9" stroke-width="1.2"/></svg>
  <svg class="abs" style="left:106.6px;top:67.6px" width="10.6" height="7.6" viewBox="0 0 10.6 7.6"><path d="M0.2 3.8 Q5.3 -2 10.4 3.8 Q5.3 9.6 0.2 3.8 Z" fill="#dadada"/><circle cx="5.3" cy="3.6" r="2" fill="#262626"/><circle cx="5.9" cy="3" r=".7" fill="#8a8a8a"/></svg><svg class="abs" style="left:106.6px;top:87.6px" width="10.6" height="7.6" viewBox="0 0 10.6 7.6"><path d="M0.2 3.8 Q5.3 -2 10.4 3.8 Q5.3 9.6 0.2 3.8 Z" fill="#dadada"/><circle cx="5.3" cy="3.6" r="2" fill="#262626"/><circle cx="5.9" cy="3" r=".7" fill="#8a8a8a"/></svg>
  <div class="t ms" style="left:108px;top:111px">M</div><div class="t ms" style="left:131px;top:111px">S</div>
  <div class="t ms" style="left:108px;top:131.6px">M</div><div class="t ms" style="left:131px;top:131.6px">S</div>
  <svg class="abs" style="left:152px;top:109.7px" width="8" height="12" viewBox="0 0 8 12"><rect x="2.3" y="0.3" width="3.4" height="7" rx="1.7" fill="#4a4a4a"/><path d="M0.7 5 Q0.7 9 4 9 Q7.3 9 7.3 5 M4 9 V11.5" fill="none" stroke="#4a4a4a" stroke-width="1"/></svg><svg class="abs" style="left:152px;top:130.3px" width="8" height="12" viewBox="0 0 8 12"><rect x="2.3" y="0.3" width="3.4" height="7" rx="1.7" fill="#4a4a4a"/><path d="M0.7 5 Q0.7 9 4 9 Q7.3 9 7.3 5 M4 9 V11.5" fill="none" stroke="#4a4a4a" stroke-width="1"/></svg>
  <!-- track area -->
  <div class="abs" style="left:191.8px;top:60.3px;width:570.7px;height:85.0px;background:#1b1b1b"></div>
  <div class="abs" style="left:191.8px;top:80.3px;width:570.7px;height:1px;background:#262626"></div>
  <div class="abs" style="left:191.8px;top:124.8px;width:570.7px;height:1px;background:#262626"></div>
  <div class="abs" style="left:0px;top:100.8px;width:772px;height:4px;background:#2d2d2d"></div>
  <!-- ruler -->
  <div class="abs" style="left:192.3px;top:23px;width:570.2px;height:30px;overflow:hidden"><div class="t rl" style="left:-28.3px;top:13.299999999999997px;width:60px;text-align:center">00:00:00:00</div><div class="t rl" style="left:51.9px;top:13.299999999999997px;width:60px;text-align:center">00:00:14:35</div><div class="t rl" style="left:132.1px;top:13.299999999999997px;width:60px;text-align:center">00:00:29:32</div><div class="t rl" style="left:212.3px;top:13.299999999999997px;width:60px;text-align:center">00:00:44:28</div><div class="t rl" style="left:292.5px;top:13.299999999999997px;width:60px;text-align:center">00:00:59:25</div><div class="t rl" style="left:372.7px;top:13.299999999999997px;width:60px;text-align:center">00:01:14:21</div><div class="t rl" style="left:452.9px;top:13.299999999999997px;width:60px;text-align:center">00:01:29:18</div><div class="t rl" style="left:533.1px;top:13.299999999999997px;width:60px;text-align:center">00:01:44:15</div></div>
  <svg class="abs" style="left:0;top:0" width="782" height="164" viewBox="0 0 782 164" stroke-width="1" fill="none"><path d="M192.5 48 V57.5" stroke="#8c8c8c"/><path d="M197.8 53.5 V57.5" stroke="#6e6e6e"/><path d="M203.2 53.5 V57.5" stroke="#6e6e6e"/><path d="M208.5 53.5 V57.5" stroke="#6e6e6e"/><path d="M213.9 53.5 V57.5" stroke="#6e6e6e"/><path d="M219.2 53.5 V57.5" stroke="#6e6e6e"/><path d="M224.6 53.5 V57.5" stroke="#6e6e6e"/><path d="M229.9 53.5 V57.5" stroke="#6e6e6e"/><path d="M235.3 53.5 V57.5" stroke="#6e6e6e"/><path d="M240.6 53.5 V57.5" stroke="#6e6e6e"/><path d="M246.0 53.5 V57.5" stroke="#6e6e6e"/><path d="M251.3 53.5 V57.5" stroke="#6e6e6e"/><path d="M256.7 53.5 V57.5" stroke="#6e6e6e"/><path d="M262.0 53.5 V57.5" stroke="#6e6e6e"/><path d="M267.4 53.5 V57.5" stroke="#6e6e6e"/><path d="M272.7 48 V57.5" stroke="#8c8c8c"/><path d="M278.0 53.5 V57.5" stroke="#6e6e6e"/><path d="M283.4 53.5 V57.5" stroke="#6e6e6e"/><path d="M288.7 53.5 V57.5" stroke="#6e6e6e"/><path d="M294.1 53.5 V57.5" stroke="#6e6e6e"/><path d="M299.4 53.5 V57.5" stroke="#6e6e6e"/><path d="M304.8 53.5 V57.5" stroke="#6e6e6e"/><path d="M310.1 53.5 V57.5" stroke="#6e6e6e"/><path d="M315.5 53.5 V57.5" stroke="#6e6e6e"/><path d="M320.8 53.5 V57.5" stroke="#6e6e6e"/><path d="M326.2 53.5 V57.5" stroke="#6e6e6e"/><path d="M331.5 53.5 V57.5" stroke="#6e6e6e"/><path d="M336.9 53.5 V57.5" stroke="#6e6e6e"/><path d="M342.2 53.5 V57.5" stroke="#6e6e6e"/><path d="M347.6 53.5 V57.5" stroke="#6e6e6e"/><path d="M352.9 48 V57.5" stroke="#8c8c8c"/><path d="M358.2 53.5 V57.5" stroke="#6e6e6e"/><path d="M363.6 53.5 V57.5" stroke="#6e6e6e"/><path d="M368.9 53.5 V57.5" stroke="#6e6e6e"/><path d="M374.3 53.5 V57.5" stroke="#6e6e6e"/><path d="M379.6 53.5 V57.5" stroke="#6e6e6e"/><path d="M385.0 53.5 V57.5" stroke="#6e6e6e"/><path d="M390.3 53.5 V57.5" stroke="#6e6e6e"/><path d="M395.7 53.5 V57.5" stroke="#6e6e6e"/><path d="M401.0 53.5 V57.5" stroke="#6e6e6e"/><path d="M406.4 53.5 V57.5" stroke="#6e6e6e"/><path d="M411.7 53.5 V57.5" stroke="#6e6e6e"/><path d="M417.1 53.5 V57.5" stroke="#6e6e6e"/><path d="M422.4 53.5 V57.5" stroke="#6e6e6e"/><path d="M427.8 53.5 V57.5" stroke="#6e6e6e"/><path d="M433.1 48 V57.5" stroke="#8c8c8c"/><path d="M438.4 53.5 V57.5" stroke="#6e6e6e"/><path d="M443.8 53.5 V57.5" stroke="#6e6e6e"/><path d="M449.1 53.5 V57.5" stroke="#6e6e6e"/><path d="M454.5 53.5 V57.5" stroke="#6e6e6e"/><path d="M459.8 53.5 V57.5" stroke="#6e6e6e"/><path d="M465.2 53.5 V57.5" stroke="#444"/><path d="M470.5 53.5 V57.5" stroke="#444"/><path d="M475.9 53.5 V57.5" stroke="#444"/><path d="M481.2 53.5 V57.5" stroke="#444"/><path d="M486.6 53.5 V57.5" stroke="#444"/><path d="M491.9 53.5 V57.5" stroke="#444"/><path d="M497.3 53.5 V57.5" stroke="#444"/><path d="M502.6 53.5 V57.5" stroke="#444"/><path d="M508.0 53.5 V57.5" stroke="#444"/><path d="M513.3 48 V57.5" stroke="#5a5a5a"/><path d="M518.6 53.5 V57.5" stroke="#444"/><path d="M524.0 53.5 V57.5" stroke="#444"/><path d="M529.3 53.5 V57.5" stroke="#444"/><path d="M534.7 53.5 V57.5" stroke="#444"/><path d="M540.0 53.5 V57.5" stroke="#444"/><path d="M545.4 53.5 V57.5" stroke="#444"/><path d="M550.7 53.5 V57.5" stroke="#444"/><path d="M556.1 53.5 V57.5" stroke="#444"/><path d="M561.4 53.5 V57.5" stroke="#444"/><path d="M566.8 53.5 V57.5" stroke="#444"/><path d="M572.1 53.5 V57.5" stroke="#444"/><path d="M577.5 53.5 V57.5" stroke="#444"/><path d="M582.8 53.5 V57.5" stroke="#444"/><path d="M588.2 53.5 V57.5" stroke="#444"/><path d="M593.5 48 V57.5" stroke="#5a5a5a"/><path d="M598.8 53.5 V57.5" stroke="#444"/><path d="M604.2 53.5 V57.5" stroke="#444"/><path d="M609.5 53.5 V57.5" stroke="#444"/><path d="M614.9 53.5 V57.5" stroke="#444"/><path d="M620.2 53.5 V57.5" stroke="#444"/><path d="M625.6 53.5 V57.5" stroke="#444"/><path d="M630.9 53.5 V57.5" stroke="#444"/><path d="M636.3 53.5 V57.5" stroke="#444"/><path d="M641.6 53.5 V57.5" stroke="#444"/><path d="M647.0 53.5 V57.5" stroke="#444"/><path d="M652.3 53.5 V57.5" stroke="#444"/><path d="M657.7 53.5 V57.5" stroke="#444"/><path d="M663.0 53.5 V57.5" stroke="#444"/><path d="M668.4 53.5 V57.5" stroke="#444"/><path d="M673.7 48 V57.5" stroke="#5a5a5a"/><path d="M679.0 53.5 V57.5" stroke="#444"/><path d="M684.4 53.5 V57.5" stroke="#444"/><path d="M689.7 53.5 V57.5" stroke="#444"/><path d="M695.1 53.5 V57.5" stroke="#444"/><path d="M700.4 53.5 V57.5" stroke="#444"/><path d="M705.8 53.5 V57.5" stroke="#444"/><path d="M711.1 53.5 V57.5" stroke="#444"/><path d="M716.5 53.5 V57.5" stroke="#444"/><path d="M721.8 53.5 V57.5" stroke="#444"/><path d="M727.2 53.5 V57.5" stroke="#444"/><path d="M732.5 53.5 V57.5" stroke="#444"/><path d="M737.9 53.5 V57.5" stroke="#444"/><path d="M743.2 53.5 V57.5" stroke="#444"/><path d="M748.6 53.5 V57.5" stroke="#444"/><path d="M753.9 48 V57.5" stroke="#5a5a5a"/><path d="M759.2 53.5 V57.5" stroke="#444"/></svg>
  <div class="abs" style="left:445.3px;top:23.5px;width:1px;height:34px;background:#8a8a8a"></div>
  <div class="abs" style="left:192.3px;top:57.8px;width:268.3px;height:2.2px;background:#e6da3a"></div>
  <!-- clips -->
  <div class="abs" style="left:300px;top:61px;width:26px;height:19.5px;background:#e884e2"></div>
  <div class="abs" style="left:309px;top:63.6px;width:9.2px;height:9.2px;background:#e7c63d;border-radius:1.5px"></div>
  <div class="t" style="left:310.8px;top:65.2px;font-size:7px;font-style:italic;color:#6a4a10">fx</div>
  <div class="abs" style="left:192.4px;top:81.3px;width:267.8px;height:19.5px;background:#729fd8;border-radius:2.5px 2.5px 0 0"></div>
  <svg class="abs" style="left:192.4px;top:81.3px" width="268" height="4" viewBox="0 0 268 4"><path d="M0 0 H3 L0 3 Z M267.8 0 H264.8 L267.8 3 Z" fill="#e8eef8"/></svg><div class="abs" style="left:201.8px;top:84.6px;width:8.8px;height:8px;background:#6f6a64;border-radius:1px"></div>
  <div class="t" style="left:203.3px;top:85.8px;font-size:6.5px;font-style:italic;font-weight:bold;color:#2a2a2a">fx</div>
  <div class="t" style="left:217px;top:85.5px;font-size:7.6px;color:#1b2638;transform:scaleX(.92);transform-origin:0 0">SVID_20230707_135154_1.mp4</div>
  <!-- playhead -->
  <div class="abs" style="left:299.6px;top:55px;width:1px;height:89.6px;background:#2d8ceb"></div>
  <svg class="abs" style="left:295.5px;top:47.8px" width="9.2" height="9.4" viewBox="0 0 9.2 9.4"><path d="M0.3 0.3 H8.9 V6 L6.8 8.8 L4.6 6.6 L2.4 8.8 L0.3 6 Z" fill="#2d8ceb"/></svg>
  <!-- v scroll -->
  <div class="abs" style="left:764.5px;top:66px;width:7px;height:30px;background:#2d2d2d"></div>
  <div class="abs" style="left:764.5px;top:109.5px;width:7px;height:31px;background:#2d2d2d"></div>
  <div class="ring" style="left:763.2px;top:61.8px"></div>
  <div class="ring" style="left:763.2px;top:91.2px"></div>
  <div class="ring" style="left:763.2px;top:105.2px"></div>
  <div class="ring" style="left:763.2px;top:135.8px"></div>
  <!-- h scroll -->
  <div class="abs" style="left:0px;top:145.3px;width:772px;height:10px;background:#242424"></div>
  <div class="abs" style="left:14px;top:146.3px;width:307.5px;height:8px;background:#3a3a3a"></div>
  <div class="abs" style="left:321.5px;top:146.3px;width:439.5px;height:8px;background:#191919;border-radius:0 4px 4px 0"></div>
  <div class="ring" style="left:9.9px;top:146.2px"></div>
  <div class="ring" style="left:317px;top:146px"></div>
</div>

<!-- ===== Audio meters ===== -->
<div id="meters" class="panel" style="left:1006px;top:561px;width:68px;height:166px">
  <div class="abs" style="left:10.5px;top:22.3px;width:30px;height:116px;background:#1f1f1f;border:1px solid #111"></div>
  <div class="abs" style="left:25.2px;top:22.3px;width:1px;height:116px;background:#111"></div>
  <div class="abs" style="left:10.5px;top:29.3px;width:30px;height:1px;background:#111"></div>
  <div class="abs" style="left:11.5px;top:23.3px;width:13.7px;height:6px;background:#262626"></div>
  <div class="abs" style="left:26.2px;top:23.3px;width:13.3px;height:6px;background:#262626"></div>
  <div class="abs" style="left:11.5px;top:136px;width:13.7px;height:1.4px;background:#a9ae32"></div>
  <div class="abs" style="left:26.2px;top:136px;width:13.3px;height:1.4px;background:#a9ae32"></div>
  <div class="abs" style="left:40.8px;top:31.3px;width:3px;height:1px;background:#6a6a6a"></div><div class="abs" style="left:40.8px;top:34.3px;width:1.5px;height:1px;background:#6a6a6a"></div><div class="abs" style="left:40.8px;top:37.3px;width:1.5px;height:1px;background:#6a6a6a"></div><div class="abs" style="left:40.8px;top:40.3px;width:1.5px;height:1px;background:#6a6a6a"></div><div class="abs" style="left:40.8px;top:43.3px;width:1.5px;height:1px;background:#6a6a6a"></div><div class="abs" style="left:40.8px;top:46.3px;width:1.5px;height:1px;background:#6a6a6a"></div><div class="abs" style="left:40.8px;top:49.2px;width:1.5px;height:1px;background:#6a6a6a"></div><div class="abs" style="left:40.8px;top:52.2px;width:3px;height:1px;background:#6a6a6a"></div><div class="abs" style="left:40.8px;top:55.2px;width:1.5px;height:1px;background:#6a6a6a"></div><div class="abs" style="left:40.8px;top:58.2px;width:1.5px;height:1px;background:#6a6a6a"></div><div class="abs" style="left:40.8px;top:61.2px;width:1.5px;height:1px;background:#6a6a6a"></div><div class="abs" style="left:40.8px;top:64.2px;width:1.5px;height:1px;background:#6a6a6a"></div><div class="abs" style="left:40.8px;top:67.2px;width:1.5px;height:1px;background:#6a6a6a"></div><div class="abs" style="left:40.8px;top:70.2px;width:1.5px;height:1px;background:#6a6a6a"></div><div class="abs" style="left:40.8px;top:73.2px;width:3px;height:1px;background:#6a6a6a"></div><div class="abs" style="left:40.8px;top:76.2px;width:1.5px;height:1px;background:#6a6a6a"></div><div class="abs" style="left:40.8px;top:79.2px;width:1.5px;height:1px;background:#6a6a6a"></div><div class="abs" style="left:40.8px;top:82.2px;width:1.5px;height:1px;background:#6a6a6a"></div><div class="abs" style="left:40.8px;top:85.1px;width:1.5px;height:1px;background:#6a6a6a"></div><div class="abs" style="left:40.8px;top:88.1px;width:1.5px;height:1px;background:#6a6a6a"></div><div class="abs" style="left:40.8px;top:91.1px;width:1.5px;height:1px;background:#6a6a6a"></div><div class="abs" style="left:40.8px;top:94.1px;width:3px;height:1px;background:#6a6a6a"></div><div class="abs" style="left:40.8px;top:97.1px;width:1.5px;height:1px;background:#6a6a6a"></div><div class="abs" style="left:40.8px;top:100.1px;width:1.5px;height:1px;background:#6a6a6a"></div><div class="abs" style="left:40.8px;top:103.1px;width:1.5px;height:1px;background:#6a6a6a"></div><div class="abs" style="left:40.8px;top:106.1px;width:1.5px;height:1px;background:#6a6a6a"></div><div class="abs" style="left:40.8px;top:109.1px;width:1.5px;height:1px;background:#6a6a6a"></div><div class="abs" style="left:40.8px;top:112.1px;width:1.5px;height:1px;background:#6a6a6a"></div><div class="abs" style="left:40.8px;top:115.1px;width:3px;height:1px;background:#6a6a6a"></div><div class="abs" style="left:40.8px;top:118.1px;width:1.5px;height:1px;background:#6a6a6a"></div><div class="abs" style="left:40.8px;top:121.0px;width:1.5px;height:1px;background:#6a6a6a"></div><div class="abs" style="left:40.8px;top:124.0px;width:1.5px;height:1px;background:#6a6a6a"></div><div class="abs" style="left:40.8px;top:127.0px;width:1.5px;height:1px;background:#6a6a6a"></div><div class="abs" style="left:40.8px;top:130.0px;width:1.5px;height:1px;background:#6a6a6a"></div><div class="abs" style="left:40.8px;top:133.0px;width:1.5px;height:1px;background:#6a6a6a"></div><div class="abs" style="left:40.8px;top:136.0px;width:3px;height:1px;background:#6a6a6a"></div><div class="t" style="left:46.5px;top:27.8px;font-size:7px;color:#8e8e8e">0</div><div class="t" style="left:46.3px;top:49.8px;font-size:7px;color:#8e8e8e">-12</div><div class="t" style="left:46.3px;top:70.5px;font-size:7px;color:#8e8e8e">-24</div><div class="t" style="left:46.3px;top:91.5px;font-size:7px;color:#8e8e8e">-36</div><div class="t" style="left:46.3px;top:112.2px;font-size:7px;color:#8e8e8e">-48</div><div class="t" style="left:46.5px;top:132.2px;font-size:7px;color:#8e8e8e">dB</div>
  <div class="abs" style="left:11.3px;top:142.2px;width:13.6px;height:13.8px;background:#1e1e1e;border:1px solid #303030"></div>
  <div class="abs" style="left:26.6px;top:142.2px;width:13.6px;height:13.8px;background:#1e1e1e;border:1px solid #303030"></div>
  <div class="t" style="left:15.3px;top:145px;font-size:8.5px;color:#b0b0b0">S</div>
  <div class="t" style="left:30.4px;top:145px;font-size:8.5px;color:#b0b0b0">S</div>
</div>

<!-- ===== Status bar ===== -->
<div id="status" class="abs" style="left:0;top:728.6px;width:1080px;height:16px;background:#252525">
  <svg class="abs" style="left:2.2px;top:3.4px" width="14" height="10" viewBox="0 0 14 10" fill="none" stroke="#d0d0d0" stroke-width="1.7"><path d="M4.2 8.8 A3.3 3.3 0 0 1 3.6 2.3 A3.6 3.6 0 0 1 10 2.6 A3.2 3.2 0 0 1 10 8.8 Z"/><path d="M4.6 6.2 Q5.4 3.8 7.4 5 Q9.2 6.4 9.8 4.6"/></svg>
  <div class="t" style="left:45px;top:3px;font-size:10.5px;color:#a2a2a2;letter-spacing:.29px">单击以选择，或单击空白处并拖动以进行框选。使用 Shift、Alt 和 Ctrl 可获得其他选项。</div>
</div>
<div class="abs" style="left:0;top:744.2px;width:1080px;height:2px;background:#c2c2be"></div>
</div>
</body>
</html>
